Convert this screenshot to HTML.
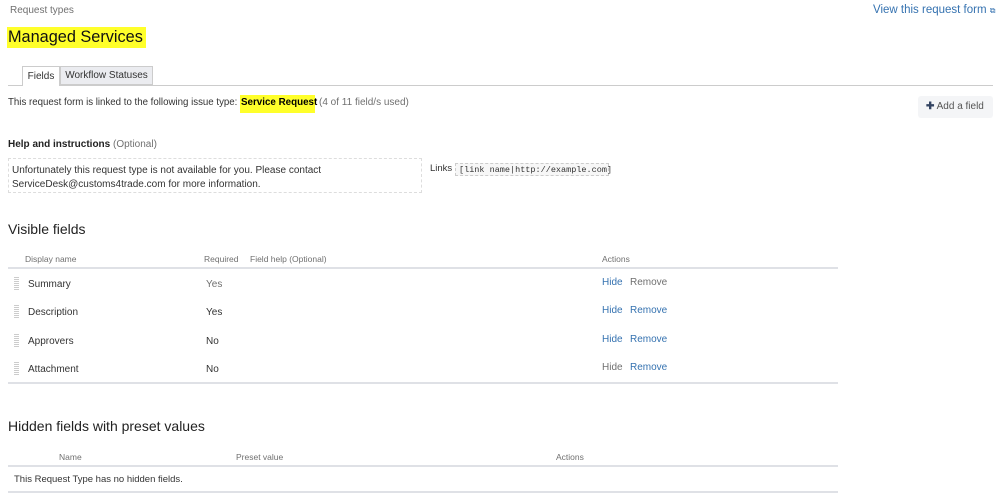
<!DOCTYPE html>
<html><head><meta charset="utf-8"><style>
body{margin:0;width:999px;height:502px;background:#fff;font-family:"Liberation Sans",sans-serif;color:#333;position:relative;overflow:hidden}
.a{position:absolute;white-space:nowrap;line-height:1}
.s{font-size:10px}
.g{color:#707070}
.b{color:#3572b0}
.line{position:absolute;height:2px;background:#dfe1e6}
.h{position:absolute;width:5px;height:14px;background:repeating-linear-gradient(#ccc 0 1px,#fff 1px 2px);left:14px}
</style></head><body>
<div class="a g s" style="left:10px;top:6px">Request types</div>
<div class="a b" style="left:873px;top:5px;font-size:11.5px">View this request form <span style="font-size:8px">⧉</span></div>
<div class="a" style="left:7px;top:27px;width:139px;height:21px;background:#ffff2a"></div>
<div class="a" style="left:8px;top:29px;font-size:16.3px;color:#111">Managed Services</div>
<div class="line" style="left:8px;top:85px;width:985px;height:1px;background:#ccc"></div>
<div class="a" style="left:22px;top:66px;width:38px;height:20px;border:1px solid #ccc;border-bottom:none;background:#fff;box-sizing:border-box;font-size:10px;text-align:center;line-height:20px">Fields</div>
<div class="a" style="left:60px;top:66px;width:93px;height:19px;border:1px solid #ccc;background:#ebecf0;box-sizing:border-box;font-size:10px;text-align:center;line-height:18px">Workflow Statuses</div>
<div class="a" style="left:240px;top:95px;width:75px;height:18px;background:#ffff2a"></div>
<div class="a" style="left:8px;top:98px;font-size:9.7px">This request form is linked to the following issue type:</div>
<div class="a" style="left:241px;top:98px;font-size:9.8px;font-weight:bold;color:#000">Service Request</div>
<div class="a g" style="left:319px;top:98px;font-size:10px">(4 of 11 field/s used)</div>
<div class="a" style="left:918px;top:96px;width:75px;height:22px;background:#f4f5f7;border-radius:3px;font-size:10px;color:#555;line-height:22px;text-indent:8px"><b style="color:#344563">✚</b> Add a field</div>
<div class="a s" style="left:8px;top:140px"><b style="color:#222">Help and instructions</b> <span class="g">(Optional)</span></div>
<div class="a" style="left:8px;top:158px;width:414px;height:35px;border:1px dashed #ddd;box-sizing:border-box"></div>
<div class="a s" style="left:12px;top:164px;line-height:14px">Unfortunately this request type is not available for you. Please contact<br>ServiceDesk@customs4trade.com for more information.</div>
<div class="a" style="left:430px;top:164px;font-size:9.5px">Links</div>
<div class="a" style="left:455px;top:163px;width:154px;height:13px;border:1px dashed #ccc;background:#f7f7f7;box-sizing:border-box;font-family:'Liberation Mono',monospace;font-size:8.5px;line-height:12px;padding-left:3px">[link name|http://example.com]</div>
<div class="a" style="left:8px;top:222px;font-size:14px;color:#222">Visible fields</div>
<div class="a g" style="left:25px;top:255px;font-size:8.5px">Display name</div>
<div class="a g" style="left:204px;top:255px;font-size:8.5px">Required</div>
<div class="a g" style="left:250px;top:255px;font-size:8.5px">Field help (Optional)</div>
<div class="a g" style="left:602px;top:255px;font-size:8.5px">Actions</div>
<div class="line" style="left:8px;top:267px;width:830px"></div>
<div class="h" style="top:277px"></div><div class="a s" style="left:28px;top:280px">Summary</div><div class="a s g" style="left:206px;top:280px">Yes</div><div class="a s b" style="left:602px;top:278px">Hide</div><div class="a s g" style="left:630px;top:278px">Remove</div>
<div class="h" style="top:305px"></div><div class="a s" style="left:28px;top:308px">Description</div><div class="a s" style="left:206px;top:308px">Yes</div><div class="a s b" style="left:602px;top:306px">Hide</div><div class="a s b" style="left:630px;top:306px">Remove</div>
<div class="h" style="top:334px"></div><div class="a s" style="left:28px;top:337px">Approvers</div><div class="a s" style="left:206px;top:337px">No</div><div class="a s b" style="left:602px;top:335px">Hide</div><div class="a s b" style="left:630px;top:335px">Remove</div>
<div class="h" style="top:362px"></div><div class="a s" style="left:28px;top:365px">Attachment</div><div class="a s" style="left:206px;top:365px">No</div><div class="a s g" style="left:602px;top:363px">Hide</div><div class="a s b" style="left:630px;top:363px">Remove</div>
<div class="line" style="left:8px;top:382px;width:830px"></div>
<div class="a" style="left:8px;top:419px;font-size:14px;color:#222">Hidden fields with preset values</div>
<div class="a g" style="left:59px;top:453px;font-size:8.5px">Name</div>
<div class="a g" style="left:236px;top:453px;font-size:8.5px">Preset value</div>
<div class="a g" style="left:556px;top:453px;font-size:8.5px">Actions</div>
<div class="line" style="left:8px;top:465px;width:830px"></div>
<div class="a" style="left:14px;top:475px;font-size:9.5px">This Request Type has no hidden fields.</div>
<div class="line" style="left:8px;top:491px;width:830px"></div>
</body></html>
